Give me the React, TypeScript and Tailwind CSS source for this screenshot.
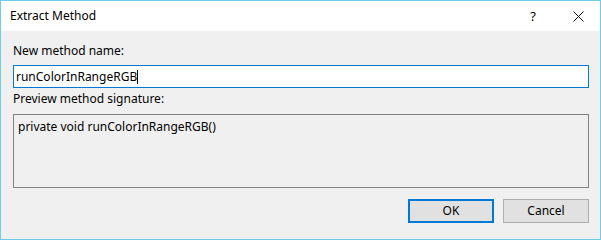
export default function App() {
  return (
    <div className="w-[601px] h-[240px] border border-[#6fcdea] bg-white flex flex-col font-['Noto_Sans',sans-serif] text-[12px] text-black">
      {/* title bar */}
      <div className="h-[30px] flex items-center pl-[9px] bg-white">
        <span className="leading-none mt-[-1px]">Extract Method</span>
        <span className="ml-auto mr-[37px] text-[13px] leading-none">?</span>
        <svg width="11" height="11" viewBox="0 0 11 11" className="mr-[16px]">
          <path d="M0.5 0.5 L10.5 10.5 M10.5 0.5 L0.5 10.5" stroke="#111" strokeWidth="1" />
        </svg>
      </div>

      {/* body */}
      <div className="flex-1 bg-[#f0f0f0] pl-[12px] pr-[11px] pt-[12px] flex flex-col">
        <label className="h-[16px] leading-[16px]">New method name:</label>
        <div className="mt-[6px] h-[23px] border border-[#0078d7] bg-white flex items-center pl-[2px]">
          <span className="leading-none">runColorInRangeRGB</span>
          <span className="w-px h-[14px] bg-black"></span>
        </div>
        <label className="mt-[3px] h-[16px] leading-[16px]">Preview method signature:</label>
        <div className="mt-[7px] h-[74px] border border-[#828282] pl-[4px] pt-[3px]">
          <span className="leading-[16px]">private void runColorInRangeRGB()</span>
        </div>
        <div className="mt-[11px] flex justify-end gap-[9px]">
          <button className="w-[86px] h-[24px] border-2 border-[#0078d7] bg-[#e1e1e1] leading-none">OK</button>
          <button className="w-[86px] h-[24px] border border-[#adadad] bg-[#e1e1e1] leading-none">Cancel</button>
        </div>
      </div>
    </div>
  )
}
